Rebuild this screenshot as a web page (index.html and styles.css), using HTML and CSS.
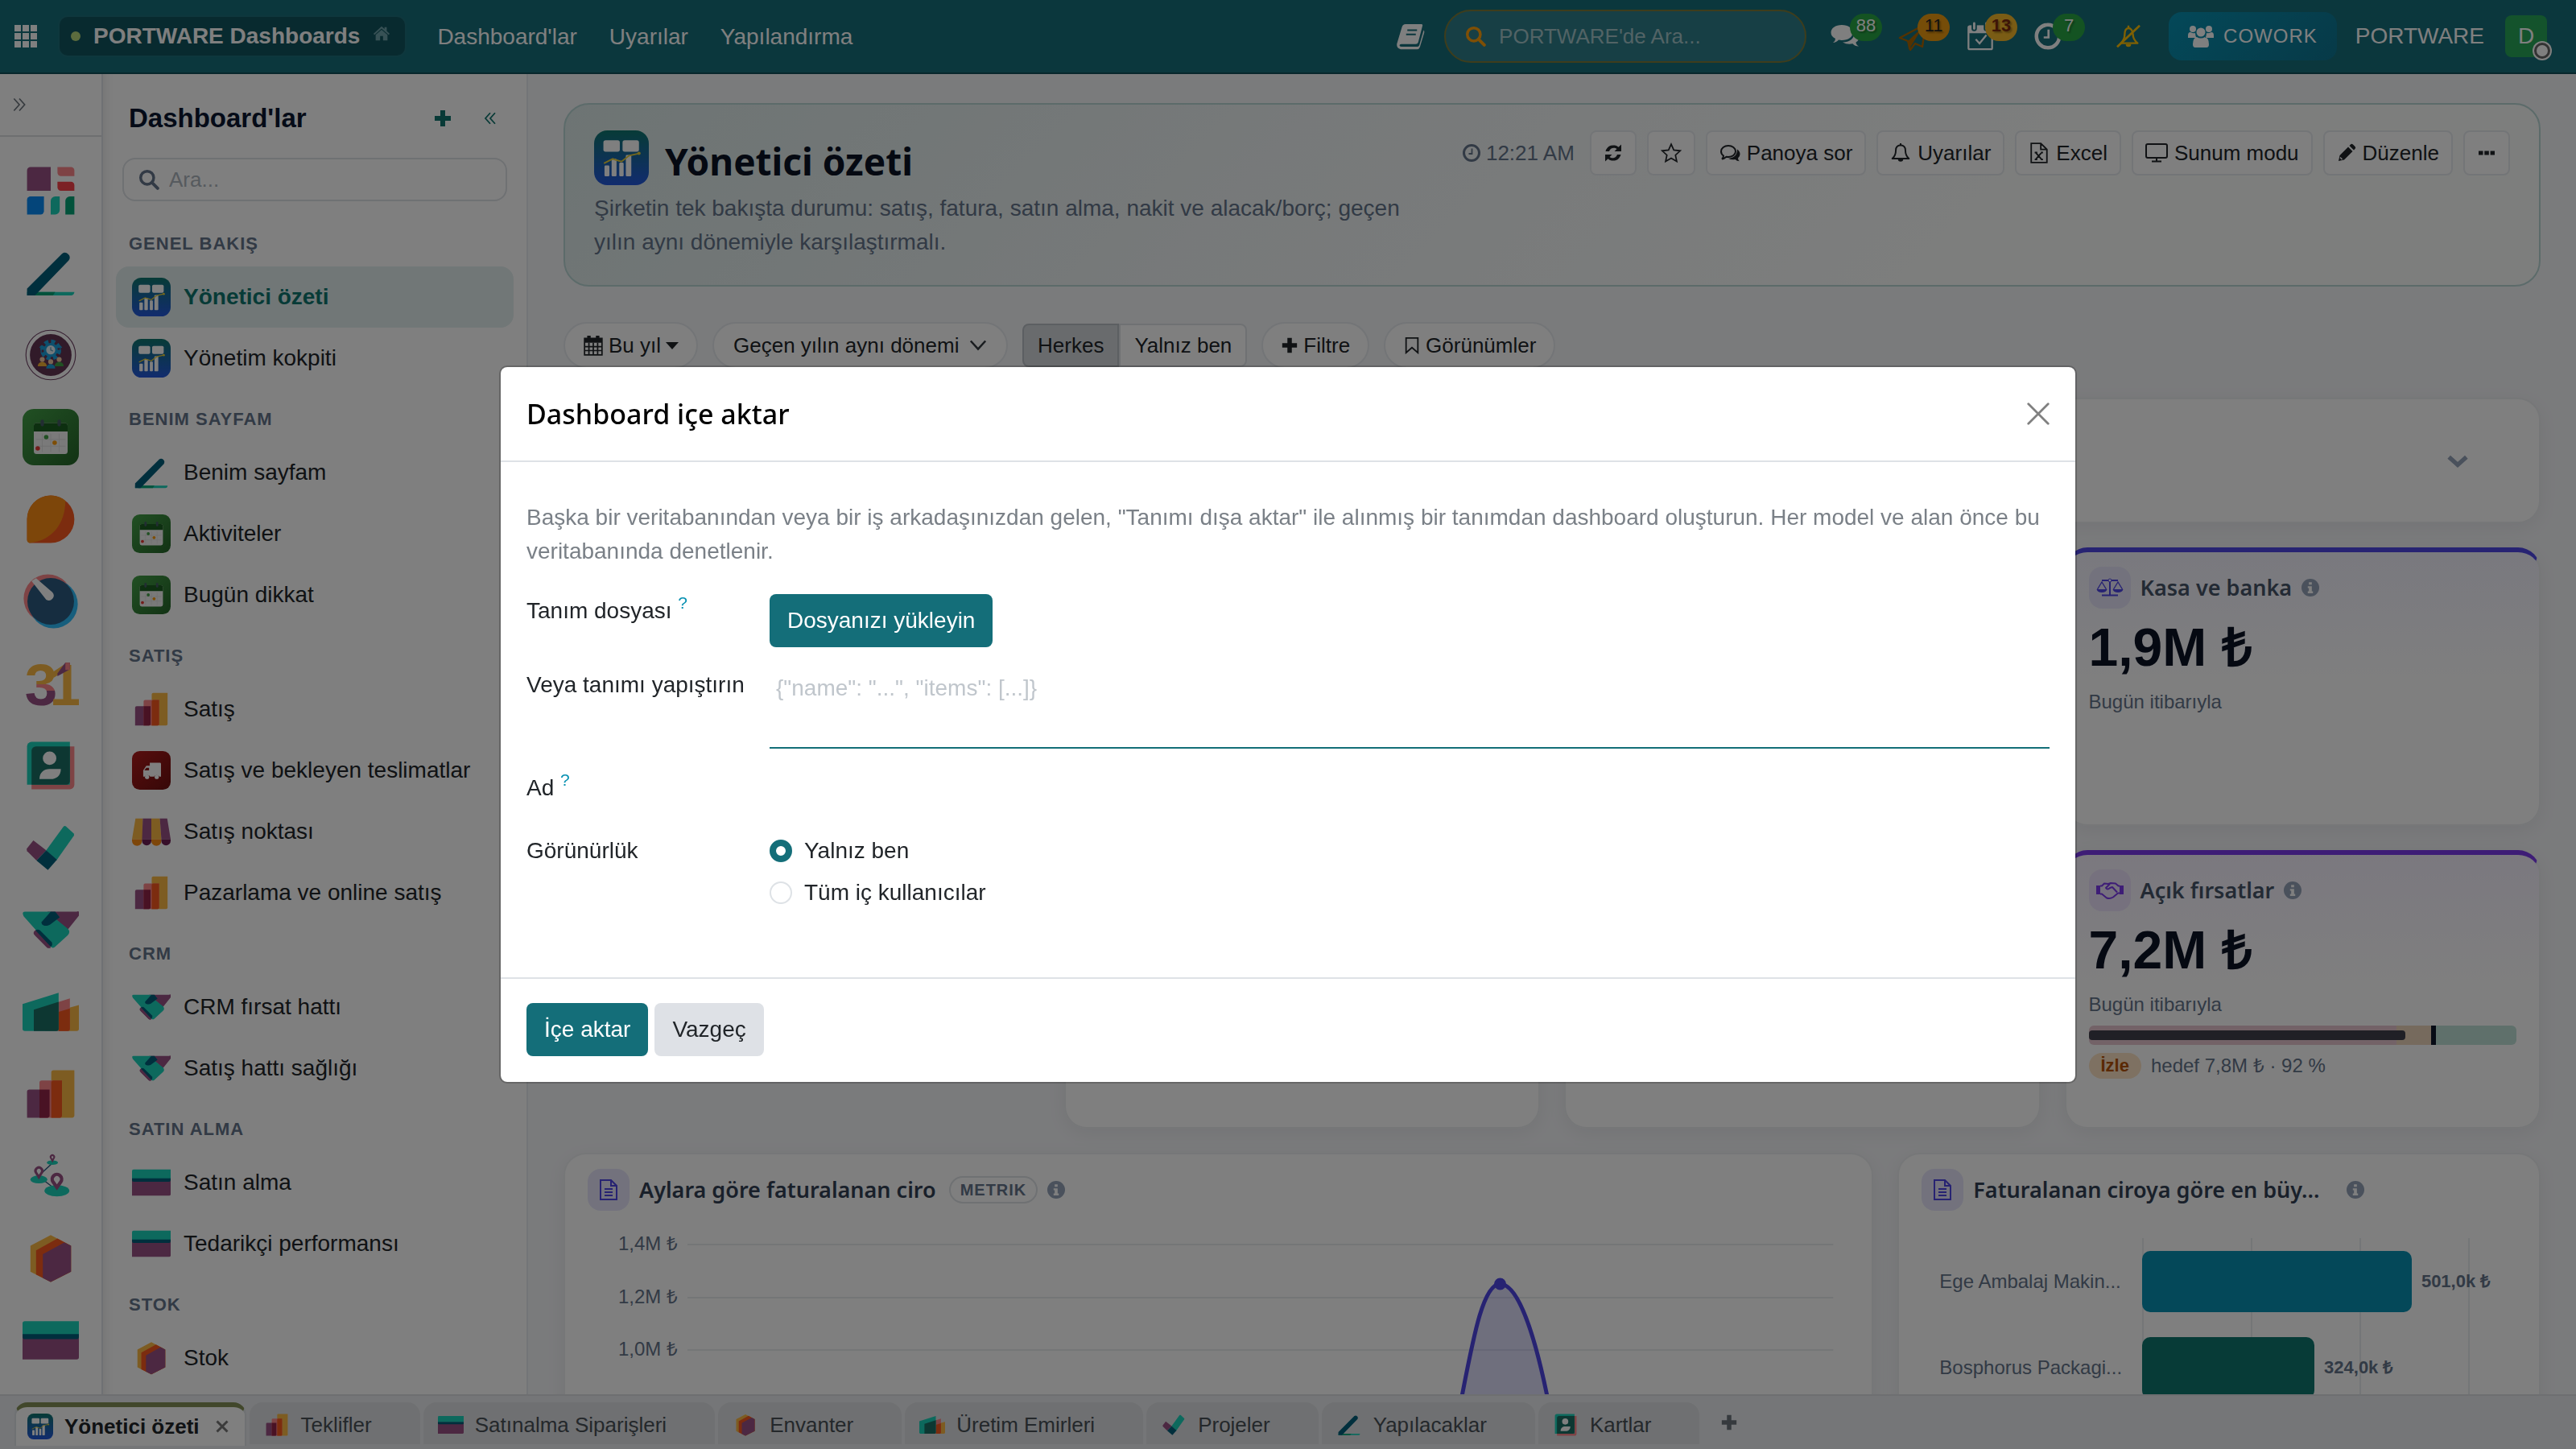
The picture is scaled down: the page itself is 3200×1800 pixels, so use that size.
FILE: index.html
```html
<!DOCTYPE html>
<html lang="tr">
<head>
    <meta charset="UTF-8">
    <meta name="viewport" content="width=device-width, initial-scale=1.0">
    <title>PORTWARE Dashboards</title>
    <link rel="stylesheet" href="styles.css">
</head>
<body>

    <!-- Icon sprite -->
    <svg class="sprite" aria-hidden="true">
        <defs>
            <linearGradient id="g-dash" x1="0" y1="0" x2="0" y2="1"><stop offset="0" stop-color="#0f766e"/><stop offset="1" stop-color="#2458dd"/></linearGradient>
            <linearGradient id="g-green" x1="0" y1="0" x2="1" y2="1"><stop offset="0" stop-color="#43a047"/><stop offset="1" stop-color="#256529"/></linearGradient>
            <linearGradient id="g-red" x1="0" y1="0" x2="1" y2="1"><stop offset="0" stop-color="#b01c1c"/><stop offset="1" stop-color="#6d0f0f"/></linearGradient>
            <linearGradient id="g-three" x1="0" y1="0" x2="0" y2="1"><stop offset=".5" stop-color="#fbb945"/><stop offset=".5" stop-color="#fc868b"/><stop offset=".6" stop-color="#fc868b"/><stop offset=".6" stop-color="#985184"/></linearGradient>
        </defs>

        <symbol id="app-dash" viewBox="0 0 50 50">
            <rect width="50" height="50" rx="12" fill="url(#g-dash)"/>
            <g fill="#fff"><rect x="8.500" y="9" width="15" height="10.500" rx="2"/><rect x="26" y="9" width="15" height="10.500" rx="2"/><rect x="9.500" y="32" width="4.500" height="10" rx="1"/><rect x="16" y="26" width="4.500" height="16" rx="1"/><rect x="23" y="29.500" width="4" height="12.500" rx="1"/><rect x="29" y="22.500" width="5" height="19.500" rx="1"/></g>
            <path d="M9 30l8-4 8 2.500 7-5.500 9-2" fill="none" stroke="#e8cf3a" stroke-width="1.400"/><circle cx="41" cy="21" r="1.500" fill="#e8cf3a"/>
        </symbol>
        <symbol id="app-home" viewBox="0 0 50 50">
            <path d="M4 7a3 3 0 0 1 3-3h18v21H4z" fill="#985184"/><path d="M31 4h12a3 3 0 0 1 3 3v5H34a3 3 0 0 1-3-3z" fill="#fc868b"/><path d="M31 17h12a3 3 0 0 1 3 3v5H34a3 3 0 0 1-3-3z" fill="#f8434a"/><path d="M4 33a3 3 0 0 1 3-3h12v13a3 3 0 0 1-3 3H4z" fill="#088bf5"/><path d="M25 46V34a4 4 0 0 1 4-4h4v12a4 4 0 0 1-4 4z" fill="#1ad3bb"/><path d="M38 46V34a4 4 0 0 1 4-4h4v16z" fill="#05a577"/>
        </symbol>
        <symbol id="app-todo" viewBox="0 0 50 50">
            <path d="M4 42h42a3 3 0 0 1-3 3H4z" fill="#1ad3bb"/><path d="M12 42h17l-2 3H8z" fill="#05a577"/><path d="M4 45v-6L35 8a4.300 4.300 0 0 1 6 6L11 45z" fill="#005e7a"/>
        </symbol>
        <symbol id="app-hr" viewBox="0 0 50 50">
            <circle cx="25" cy="25" r="22" fill="none" stroke="#6d4163" stroke-width=".8"/><circle cx="25" cy="25" r="18.500" fill="#633553"/>
            <circle cx="25" cy="20.500" r="7.500" fill="none" stroke="#1ba1dd" stroke-width="3.500" stroke-dasharray="3.600 2.300"/><circle cx="25" cy="20.500" r="6.300" fill="#1ba1dd"/><circle cx="25" cy="20.500" r="4" fill="#e6f2f8"/><path d="M25 18v2.500l2 1" stroke="#6aa7c4" fill="none"/>
            <path d="M16.500 23v-6m-1.300 1.500l1.300-1.500 1.300 1.500M33.500 23v-6m-1.300 1.500l1.300-1.500 1.300 1.500" stroke="#1ba1dd" stroke-width=".8" fill="none"/>
            <circle cx="17.500" cy="29" r="2.200" fill="#f1c9a5"/><circle cx="32.500" cy="29" r="2.200" fill="#f1c9a5"/><path d="M13.500 35a4 4 0 0 1 8 0z" fill="#f2b035"/><path d="M28.500 35a4 4 0 0 1 8 0z" fill="#43a047"/><circle cx="25" cy="31" r="2.200" fill="#f1c9a5"/><path d="M21 37a4 4 0 0 1 8 0z" fill="#1ba1dd"/>
        </symbol>
        <symbol id="app-activity" viewBox="0 0 50 50">
            <rect width="50" height="50" rx="10" fill="url(#g-green)"/><rect x="10" y="12.500" width="30" height="27.500" rx="2.500" fill="#f4f4f4"/><path d="M10 20v-5a2.500 2.500 0 0 1 2.500-2.500h25A2.500 2.500 0 0 1 40 15v5z" fill="#1b5e20"/>
            <g fill="#455a64"><rect x="16" y="9.500" width="3" height="6" rx="1.500"/><rect x="31" y="9.500" width="3" height="6" rx="1.500"/></g>
            <path d="M17.500 22v16M25 22v16M32.500 22v16M12 27h26M12 33h26" stroke="#dcdcdc" stroke-width=".6"/><circle cx="21" cy="25" r="2" fill="#43a047"/><circle cx="28.500" cy="30" r="2" fill="#fb9a0a"/><circle cx="13.500" cy="35" r="2" fill="#e53935"/>
        </symbol>
        <symbol id="app-discuss" viewBox="0 0 50 50">
            <path d="M4 25a21 21 0 1 1 21 21H7a3 3 0 0 1-3-3z" fill="#f9591f"/><path d="M38 8.500C38 28 27 44 6 46a3 3 0 0 1-2-3V25A21 21 0 0 1 38 8.500z" fill="#fb8c14"/>
        </symbol>
        <symbol id="app-gauge" viewBox="0 0 50 50">
            <circle cx="22.500" cy="22.500" r="21.500" fill="#fc868b"/><circle cx="27.500" cy="27.500" r="21.500" fill="#2ebcfa"/><circle cx="25" cy="25" r="20.700" fill="#2c5b80"/><path d="M8 7l4-2.500L26.500 17a4.300 4.300 0 0 1-5.500 6.500z" fill="#fff"/>
        </symbol>
        <symbol id="app-contacts" viewBox="0 0 50 50">
            <path d="M8 8h38v34a4 4 0 0 1-4 4H8z" fill="#fc868b"/><path d="M4 8a4 4 0 0 1 4-4h34v38H4z" fill="#1ad3bb"/><path d="M8 12a4 4 0 0 1 4-4h30v31a3 3 0 0 1-3 3H8z" fill="#1a6f65"/><circle cx="24" cy="18.500" r="6" fill="#fff"/><path d="M15 37c0-6 4-9 9-9h10c0 6-4 9-9 9z" fill="#fff"/>
        </symbol>
        <symbol id="app-project" viewBox="0 0 50 50">
            <path d="M3.600 26l6-7.500L21 27.300 12.400 36.500 4 28z" fill="#985184"/><path d="M21 27.300L36.500 6a2 2 0 0 1 2 0l7 6.500a2 2 0 0 1 0 2L30 36.500z" fill="#1ad3bb"/><path d="M12.400 36.500L21 27.300l9.500 8.500-8 9z" fill="#005e7a"/>
        </symbol>
        <symbol id="app-crm" viewBox="0 0 50 50">
            <path d="M22 9h26a2 2 0 0 1 2 3.500L40 25z" fill="#985184"/><path d="M10 29a3 3 0 0 1 5-3l11 10-2 5h-2z" fill="#985184"/><path d="M2 9h23l4 6 11 9q3 3 0 6L29 40q-2 2-4 0L1 13Q-1 9 2 9z" fill="#1ad3bb"/><path d="M11 30a4 4 0 0 1 1-4l4 3 8 8 1 4q-2 1-4-1z" fill="#985184"/><path d="M25 9h4l4 5-8 6c-4 3-9 1-8-2z" fill="#005e7a"/><path d="M11.500 25.500q2-1.500 4 0L26 36q1 3-1 4z" fill="#005e7a"/>
        </symbol>
        <symbol id="app-mrp" viewBox="0 0 50 50">
            <path d="M32 24l18-5v21a2 2 0 0 1-2 2H32z" fill="#fbb945"/><path d="M20 20l22-7v27a2 2 0 0 1-2 2H20z" fill="#fc868b"/><path d="M32 25l10-3v18a2 2 0 0 1-2 2h-8z" fill="#f9591f"/><path d="M0 18l32-10v32a2 2 0 0 1-2 2H2a2 2 0 0 1-2-2z" fill="#1ad3bb"/><path d="M10 23l22-7v24a2 2 0 0 1-2 2H10z" fill="#1a6f65"/>
        </symbol>
        <symbol id="app-sales" viewBox="0 0 50 50">
            <path d="M4 23a2 2 0 0 1 2-2h18v23a2 2 0 0 1-2 2H4z" fill="#985184"/><path d="M25.500 6a2 2 0 0 1 2-2H46v40a2 2 0 0 1-2 2H25.500z" fill="#fbb945"/><path d="M15 15a2 2 0 0 1 2-2h18v31a2 2 0 0 1-2 2H15z" fill="#fc868b"/><path d="M15 21h9v23a2 2 0 0 1-2 2h-7z" fill="#932449"/><path d="M25.500 15a2 2 0 0 1 2-2H35v31a2 2 0 0 1-2 2h-7.500z" fill="#f9591f"/>
        </symbol>
        <symbol id="app-map" viewBox="0 0 50 50">
            <path d="M27 13L14 25l17 13" stroke="#2c5b80" fill="none"/><g fill="#1ad3bb"><ellipse cx="14.500" cy="28" rx="7.500" ry="3.500"/><ellipse cx="30.500" cy="38" rx="11" ry="5"/><ellipse cx="26.500" cy="13" rx="5" ry="2"/></g>
            <g fill="none" stroke="#985184"><path d="M14.500 26l-2.500-4a3 3 0 1 1 5 0z" stroke-width="2.200"/><path d="M30.500 35l-3.500-5a4.200 4.200 0 1 1 7 0z" stroke-width="3"/><path d="M26.500 11.500l-1.300-2.500a1.600 1.600 0 1 1 2.600 0z" stroke-width="1.500"/></g>
        </symbol>
        <symbol id="app-stock" viewBox="0 0 50 50">
            <path d="M7 14l18-9.500L43 14v23l-18 9-18-9z" fill="#fbb945"/><path d="M12 18l19-10.500L43 14v23l-18 9-13-6.500z" fill="#f9591f"/><path d="M18 21.500L37 11l6 3v23l-18 9-7-3.500z" fill="#985184"/>
        </symbol>
        <symbol id="app-purchase" viewBox="0 0 50 50">
            <path d="M0 16h50v24a2 2 0 0 1-2 2H0z" fill="#985184"/><path d="M0 10a2 2 0 0 1 2-2h48v12H0z" fill="#1ad3bb"/><path d="M0 19.500h50V22a2 2 0 0 1-2 2H2a2 2 0 0 1-2-2z" fill="#005e7a"/>
        </symbol>
        <symbol id="app-truck" viewBox="0 0 50 50">
            <rect width="50" height="50" rx="10" fill="url(#g-red)"/><path d="M23 15h13a1.500 1.500 0 0 1 1.500 1.500V33h-2a4 4 0 0 0-7 0h-5a4 4 0 0 0-7 0h-2v-8l4-6H23z" fill="#fff"/><path d="M16 25l2.500-3.500H22V25z" fill="#8d1717"/><circle cx="19.500" cy="33.500" r="2.700" fill="#fff"/><circle cx="32" cy="33.500" r="2.700" fill="#fff"/>
        </symbol>
        <symbol id="app-pos" viewBox="0 0 50 50">
            <path d="M4.500 8H14v27H0z" fill="#fbb945"/><path d="M14 8h11v27H13z" fill="#985184"/><path d="M25 8h11l2 27H25z" fill="#fbb945"/><path d="M36 8h9.500L50 35H38z" fill="#985184"/>
            <path d="M0 35h13v2a6.400 6.400 0 0 1-13 0zM25 35h13v2a6.400 6.400 0 0 1-13 0z" fill="#fb8c14"/><path d="M13 35h12v2a6 6 0 0 1-12 0zM38 35h12v2a6 6 0 0 1-12 0z" fill="#6f1f55"/>
        </symbol>

        <symbol id="i-grid" viewBox="0 0 28 28"><path d="M0 0h8v8H0zM10 0h8v8h-8zM20 0h8v8h-8zM0 10h8v8H0zM10 10h8v8h-8zM20 10h8v8h-8zM0 20h8v8H0zM10 20h8v8h-8zM20 20h8v8h-8z" fill="currentColor"/></symbol>
        <symbol id="i-house" viewBox="0 0 24 24"><path d="M12 3L1 13l1.500 1.500L12 6l9.500 8.500L23 13l-4-3.700V4h-3v2.500zM4 14.500V22h6v-6h4v6h6v-7.500L12 7.500z" fill="currentColor"/></symbol>
        <symbol id="i-search" viewBox="0 0 24 24"><circle cx="10" cy="10" r="7.500" fill="none" stroke="currentColor" stroke-width="3.200"/><path d="M15.500 15.500l6.500 6.500" stroke="currentColor" stroke-width="3.600" stroke-linecap="round"/></symbol>
        <symbol id="i-plus" viewBox="0 0 24 24"><path d="M9 2h6v7h7v6h-7v7H9v-7H2V9h7z" fill="currentColor"/></symbol>
        <symbol id="i-right2" viewBox="0 0 24 24"><path d="M4 3l8 9-8 9M12 3l8 9-8 9" fill="none" stroke="currentColor" stroke-width="2"/></symbol>
        <symbol id="i-left2" viewBox="0 0 24 24"><path d="M12 3l-8 9 8 9M20 3l-8 9 8 9" fill="none" stroke="currentColor" stroke-width="2.400"/></symbol>
        <symbol id="i-book" viewBox="0 0 24 24"><path d="M8 2h13q1.500 0 1 1.500L18.500 17q-.5 1.500-2 1.500H4.500Q3 18.500 3 19.500t1.500 1.200H18q1 0 1.400-1.200L23 7q.8.600.5 2l-3.600 12q-.6 1.800-2.400 1.800H4Q.5 22 .8 18.500L5 4.500Q5.800 2 8 2z" fill="currentColor"/><path d="M9.500 7h8M8.500 10.500h8" stroke="#166e7b" stroke-width="1.400"/></symbol>
        <symbol id="i-chat" viewBox="0 0 36 32"><path d="M14 2c8 0 13.500 4 13.500 9.500S22 21 14 21q-2 0-4-.4Q7 24 3 24q3-2 3-5-5.500-3-5.500-7.500C.5 6 6 2 14 2z" fill="currentColor"/><path d="M30 9q5.500 3 5.500 8 0 4-4 6.500 0 3 3.500 5-4.500.2-7.500-3.200-7 1.500-12.500-1.800Q30 23 30 9z" fill="currentColor"/></symbol>
        <symbol id="i-plane" viewBox="0 0 36 36"><path d="M2 20L34 3l-4 28-9-4-6 8-3-11z" fill="none" stroke="currentColor" stroke-width="2.400" stroke-linejoin="round"/><path d="M12 24L31 6 18 27l-5 8z" fill="currentColor"/></symbol>
        <symbol id="i-calcheck" viewBox="0 0 34 38"><path d="M1 7q0-2 2-2h28q2 0 2 2v8H1z" fill="currentColor"/><rect x="1.500" y="6" width="31" height="30" rx="1.500" fill="none" stroke="currentColor" stroke-width="2.400"/><path d="M9 1v8M25 1v8" stroke="#166e7b" stroke-width="7" stroke-linecap="round"/><path d="M9 2v7M25 2v7" stroke="currentColor" stroke-width="3" stroke-linecap="round"/><path d="M11 23l5 5.500 9-11" fill="none" stroke="currentColor" stroke-width="2.400"/></symbol>
        <symbol id="i-clock" viewBox="0 0 24 24"><circle cx="12" cy="12" r="9.500" fill="none" stroke="currentColor" stroke-width="3"/><path d="M12.500 6.500v6.500H8.500" fill="none" stroke="currentColor" stroke-width="1.800"/></symbol>
        <symbol id="i-belloff" viewBox="0 0 24 24"><path d="M12 2v2M5 18.500q3.500-3.500 3.500-8C8.500 6.500 10 4.500 12 4.500s4 2 4.200 6q.2 4.500 4.300 8z" fill="none" stroke="currentColor" stroke-width="1.800" stroke-linejoin="round"/><path d="M9.500 19.500h5a2.500 2.500 0 0 1-5 0z" fill="currentColor"/><path d="M1.500 22L22.500 2" stroke="currentColor" stroke-width="2"/></symbol>
        <symbol id="i-users" viewBox="0 0 32 28"><g fill="currentColor"><circle cx="6" cy="5" r="4"/><circle cx="26" cy="5" r="4"/><circle cx="16" cy="9" r="5.500"/><path d="M0 16V13q0-4 3-4 4 2 6 1 0 4 2 6zM32 16v-3q0-4-3-4-4 2-6 1 0 4-2 6zM9 28q-3 0-3-4 0-8 5-9 5 3 10 0 5 1 5 9 0 4-3 4z"/></g></symbol>
        <symbol id="i-refresh" viewBox="0 0 24 24"><path d="M2.500 10a9.800 9.800 0 0 1 16-5.200L22 1.500V10h-8.500l3-3A6 6 0 0 0 7 10zM21.500 14a9.800 9.800 0 0 1-16 5.200L2 22.500V14h8.500l-3 3a6 6 0 0 0 9.500-3z" fill="currentColor"/></symbol>
        <symbol id="i-star" viewBox="0 0 24 24"><path d="M12 2l3 6.700 7.300.8-5.400 5 1.500 7.200L12 18l-6.400 3.700 1.500-7.200-5.400-5L9 8.700z" fill="none" stroke="currentColor" stroke-width="1.600"/></symbol>
        <symbol id="i-ask" viewBox="0 0 26 24"><path d="M11 3c5 0 9 3 9 7s-4 7-9 7l-2.500-.3Q6 19 3 19.500q2-1.500 2-4-3-2-3-5.500c0-4 4-7 9-7z" fill="none" stroke="currentColor" stroke-width="2"/><path d="M22 7.500q3.500 2.500 3.500 6 0 3-2.500 5 0 2.200 2 3.800-3.500 0-5.500-2.300-5 1-8.500-1.200 11-.8 11-11.300z" fill="currentColor"/></symbol>
        <symbol id="i-bell" viewBox="0 0 24 24"><path d="M12 1v2M2.500 18.500q4-3.500 4-9.500 0-5.500 5.500-6 5.500.5 5.500 6 0 6 4 9.500z" fill="none" stroke="currentColor" stroke-width="1.800" stroke-linejoin="round"/><path d="M9 19h6a3 3 0 0 1-6 0z" fill="currentColor"/></symbol>
        <symbol id="i-excel" viewBox="0 0 24 24"><path d="M3 1h11l7 7v15H3zM14 1v7h7M8 11.500l7 8M15 11.500l-7 8M7 11.500h3m4 0h2.500M7 19.500h3m4 0h2.500" fill="none" stroke="currentColor" stroke-width="1.700"/></symbol>
        <symbol id="i-screen" viewBox="0 0 28 24"><rect x="1" y="1" width="26" height="17" rx="2" fill="none" stroke="currentColor" stroke-width="2"/><path d="M14 18v4M8 22.500h12" stroke="currentColor" stroke-width="2"/></symbol>
        <symbol id="i-pencil" viewBox="0 0 24 24"><path d="M2 22l1.500-7L14 4.500l5.500 5.500L9 20.500zM15.500 3l2-2q1.200-.6 2.500.5l2.500 2.500q1.200 1.200.3 2.500L21 8.500z" fill="currentColor"/><path d="M4 17.500l2.500 2.500" stroke="#fff" stroke-width="1.500"/></symbol>
        <symbol id="i-dots" viewBox="0 0 24 24"><path d="M2 9.500h5.500v5H2zM9.300 9.500h5.500v5H9.300zM16.600 9.500H22v5h-5.400z" fill="currentColor"/></symbol>
        <symbol id="i-cal" viewBox="0 0 24 24"><path d="M2 4h20v5H2z" fill="currentColor"/><path d="M2 4h20v19H2zM7 9v14M12 9v14M17 9v14M2 13.500h20M2 18h20" fill="none" stroke="currentColor" stroke-width="1.600"/><path d="M7 1v5M17 1v5" stroke="currentColor" stroke-width="4"/></symbol>
        <symbol id="i-mark" viewBox="0 0 24 24"><path d="M4 2h16v20l-8-7-8 7z" fill="none" stroke="currentColor" stroke-width="2"/></symbol>
        <symbol id="i-caret" viewBox="0 0 16 16"><path d="M0 4h16l-8 9z" fill="currentColor"/></symbol>
        <symbol id="i-down" viewBox="0 0 24 24"><path d="M2 8l10 9 10-9" fill="none" stroke="currentColor" stroke-width="5"/></symbol>
        <symbol id="i-x" viewBox="0 0 24 24"><path d="M1.500 1.500l21 21M22.500 1.500l-21 21" stroke="currentColor" stroke-width="2.400" stroke-linecap="round"/></symbol>
        <symbol id="i-close" viewBox="0 0 16 16"><path d="M1.500 1.500l13 13M14.500 1.500l-13 13" stroke="currentColor" stroke-width="3"/></symbol>
        <symbol id="i-info" viewBox="0 0 24 24"><circle cx="12" cy="12" r="12" fill="currentColor"/><path d="M10 4.500h4v3.500h-4zM8.500 10H14v7h1.500v2.500h-7V17H10v-4.500H8.500z" fill="#fff"/></symbol>
        <symbol id="i-scale" viewBox="0 0 34 24"><path d="M7 3h20M17 3v18M7 21.500h20" stroke="currentColor" stroke-width="2"/><circle cx="17" cy="3" r="2" fill="#fff" stroke="currentColor"/><path d="M1.500 14L7 5l5.500 9M21.500 14L27 5l5.500 9" fill="none" stroke="currentColor" stroke-width="1.400"/><path d="M.5 14h13q-1 4-6.500 4T.5 14zM20.500 14h13q-1 4-6.500 4t-6.500-4z" fill="currentColor"/></symbol>
        <symbol id="i-shake" viewBox="0 0 34 24"><path d="M0 6h5v11H0zM29 6h5v11h-5z" fill="currentColor"/><path d="M5 6.500h2l3-3 5 .500 3-1 6 .500 3.500 3H29M5 16.500h2l6 5q4 1.500 8-1l6-5h2M17 4l-5 5q2 3 5 0l3-1 6 6.500" fill="none" stroke="currentColor" stroke-width="2" stroke-linejoin="round"/></symbol>
        <symbol id="i-file" viewBox="0 0 24 28"><path d="M2 2h13l7 7v17H2zM15 2v7h7M7 13h10M7 17h10M7 21h10" fill="none" stroke="currentColor" stroke-width="2"/></symbol>
    </svg>

    <header class="navbar">
        <button class="icon-btn" aria-label="Uygulamalar"><svg class="ic-28"><use href="#i-grid"/></svg></button>
        <a class="brand" href="#"><span class="brand-dot"></span>PORTWARE Dashboards<svg class="ic-22 brand-home"><use href="#i-house"/></svg></a>
        <nav class="nav-links">
            <a href="#">Dashboard'lar</a>
            <a href="#">Uyarılar</a>
            <a href="#">Yapılandırma</a>
        </nav>
        <div class="nav-right">
            <button class="icon-btn" aria-label="Kılavuz"><svg class="ic-36"><use href="#i-book"/></svg></button>
            <label class="nav-search"><svg class="ic-26"><use href="#i-search"/></svg><input type="search" placeholder="PORTWARE'de Ara..." aria-label="PORTWARE'de Ara"></label>
            <div class="systray">
                <button class="icon-btn tray" aria-label="Mesajlar"><svg class="ic-36"><use href="#i-chat"/></svg><span class="badge green">88</span></button>
                <button class="icon-btn tray plane" aria-label="Gönderiler"><svg class="ic-36"><use href="#i-plane"/></svg><span class="badge amber">11</span></button>
                <button class="icon-btn tray" aria-label="Görevler"><svg class="ic-36"><use href="#i-calcheck"/></svg><span class="badge gold">13</span></button>
                <button class="icon-btn tray" aria-label="Aktiviteler"><svg class="ic-36"><use href="#i-clock"/></svg><span class="badge green">7</span></button>
            </div>
            <button class="icon-btn mute" aria-label="Bildirimler kapalı"><svg class="ic-32"><use href="#i-belloff"/></svg></button>
            <button class="cowork"><svg class="ic-32"><use href="#i-users"/></svg>COWORK</button>
            <span class="company">PORTWARE</span>
            <button class="avatar" aria-label="Profil">D<span class="status"></span></button>
        </div>
    </header>

    <div class="workspace">
        <aside class="rail">
            <button class="rail-toggle" aria-label="Genişlet"><svg class="ic-20"><use href="#i-right2"/></svg></button>
            <nav class="rail-apps">
                <a href="#" aria-label="Ana sayfa"><svg><use href="#app-home"/></svg></a>
                <a href="#" aria-label="Yapılacaklar"><svg><use href="#app-todo"/></svg></a>
                <a href="#" aria-label="İnsan kaynakları"><svg><use href="#app-hr"/></svg></a>
                <a href="#" aria-label="Aktiviteler"><svg><use href="#app-activity"/></svg></a>
                <a href="#" aria-label="Mesajlaşma"><svg><use href="#app-discuss"/></svg></a>
                <a href="#" aria-label="Göstergeler"><svg><use href="#app-gauge"/></svg></a>
                <a href="#" aria-label="Takvim">
                    <svg class="calendar-icon" viewBox="0 0 50 50">
                        <text x="2" y="44" fill="url(#g-three)">3</text>
                        <text x="24" y="44" fill="#fbb945">1</text>
                        <path d="M31 16l7-9.500h4v6l-11 6z" fill="#985184"/><path d="M38 6.500h4V13h-4z" fill="#fc868b"/>
                    </svg>
                </a>
                <a href="#" aria-label="Kartlar"><svg><use href="#app-contacts"/></svg></a>
                <a href="#" aria-label="Projeler"><svg><use href="#app-project"/></svg></a>
                <a href="#" aria-label="CRM"><svg><use href="#app-crm"/></svg></a>
                <a href="#" aria-label="Üretim"><svg><use href="#app-mrp"/></svg></a>
                <a href="#" aria-label="Satış"><svg><use href="#app-sales"/></svg></a>
                <a href="#" aria-label="Saha"><svg><use href="#app-map"/></svg></a>
                <a href="#" aria-label="Envanter"><svg><use href="#app-stock"/></svg></a>
                <a href="#" aria-label="Satın alma"><svg><use href="#app-purchase"/></svg></a>
            </nav>
        </aside>

        <aside class="sidebar">
            <div class="sidebar-head">
                <h2>Dashboard'lar</h2>
                <button class="icon-btn" aria-label="Ekle"><svg class="ic-24"><use href="#i-plus"/></svg></button>
                <button class="icon-btn" aria-label="Daralt"><svg class="ic-18"><use href="#i-left2"/></svg></button>
            </div>
            <label class="side-search"><svg class="ic-26"><use href="#i-search"/></svg><input type="search" placeholder="Ara..." aria-label="Ara"></label>
            <nav class="side-nav">
                <h3>GENEL BAKIŞ</h3>
                <a class="active" href="#"><svg><use href="#app-dash"/></svg>Yönetici özeti</a>
                <a href="#"><svg><use href="#app-dash"/></svg>Yönetim kokpiti</a>
                <h3>BENIM SAYFAM</h3>
                <a href="#"><svg><use href="#app-todo"/></svg>Benim sayfam</a>
                <a href="#"><svg><use href="#app-activity"/></svg>Aktiviteler</a>
                <a href="#"><svg><use href="#app-activity"/></svg>Bugün dikkat</a>
                <h3>SATIŞ</h3>
                <a href="#"><svg><use href="#app-sales"/></svg>Satış</a>
                <a href="#"><svg><use href="#app-truck"/></svg>Satış ve bekleyen teslimatlar</a>
                <a href="#"><svg><use href="#app-pos"/></svg>Satış noktası</a>
                <a href="#"><svg><use href="#app-sales"/></svg>Pazarlama ve online satış</a>
                <h3>CRM</h3>
                <a href="#"><svg><use href="#app-crm"/></svg>CRM fırsat hattı</a>
                <a href="#"><svg><use href="#app-crm"/></svg>Satış hattı sağlığı</a>
                <h3>SATIN ALMA</h3>
                <a href="#"><svg><use href="#app-purchase"/></svg>Satın alma</a>
                <a href="#"><svg><use href="#app-purchase"/></svg>Tedarikçi performansı</a>
                <h3>STOK</h3>
                <a href="#"><svg><use href="#app-stock"/></svg>Stok</a>
            </nav>
        </aside>

        <main class="main">
            <section class="hero">
                <div class="hero-text">
                    <div class="hero-title"><svg><use href="#app-dash"/></svg><h1>Yönetici özeti</h1></div>
                    <p>Şirketin tek bakışta durumu: satış, fatura, satın alma, nakit ve alacak/borç; geçen yılın aynı dönemiyle karşılaştırmalı.</p>
                </div>
                <div class="hero-actions">
                    <span class="clock"><svg class="ic-24"><use href="#i-clock"/></svg>12:21 AM</span>
                    <button aria-label="Yenile"><svg class="ic-24"><use href="#i-refresh"/></svg></button>
                    <button aria-label="Favori"><svg class="ic-26"><use href="#i-star"/></svg></button>
                    <button><svg class="ic-26"><use href="#i-ask"/></svg>Panoya sor</button>
                    <button><svg class="ic-26"><use href="#i-bell"/></svg>Uyarılar</button>
                    <button><svg class="ic-26"><use href="#i-excel"/></svg>Excel</button>
                    <button><svg class="ic-28"><use href="#i-screen"/></svg>Sunum modu</button>
                    <button><svg class="ic-24"><use href="#i-pencil"/></svg>Düzenle</button>
                    <button aria-label="Diğer"><svg class="ic-24"><use href="#i-dots"/></svg></button>
                </div>
            </section>

            <div class="filters">
                <button class="pill"><svg class="ic-26"><use href="#i-cal"/></svg>Bu yıl<svg class="ic-16"><use href="#i-caret"/></svg></button>
                <select class="pill" aria-label="Karşılaştırma dönemi"><option>Geçen yılın aynı dönemi</option></select>
                <div class="btn-group"><button class="on">Herkes</button><button>Yalnız ben</button></div>
                <button class="pill"><svg class="ic-22"><use href="#i-plus"/></svg>Filtre</button>
                <button class="pill"><svg class="ic-22"><use href="#i-mark"/></svg>Görünümler</button>
            </div>

            <section class="card summary"><svg class="ic-26"><use href="#i-down"/></svg></section>

            <section class="board">
                <article class="card kpi indigo"></article>
                <article class="card kpi indigo"></article>
                <article class="card kpi indigo"></article>
                <article class="card kpi indigo">
                    <header><span class="chip"><svg><use href="#i-scale"/></svg></span><h4>Kasa ve banka</h4><svg class="ic-22 info"><use href="#i-info"/></svg></header>
                    <strong>1,9M ₺</strong>
                    <small>Bugün itibarıyla</small>
                </article>
                <article class="card kpi violet second"></article>
                <article class="card kpi violet"></article>
                <article class="card kpi violet">
                    <header><span class="chip"><svg><use href="#i-shake"/></svg></span><h4>Açık fırsatlar</h4><svg class="ic-22 info"><use href="#i-info"/></svg></header>
                    <strong>7,2M ₺</strong>
                    <small>Bugün itibarıyla</small>
                    <div class="bullet"><span class="bullet-fill" style="width: 74%"></span><span class="bullet-mark" style="left: 80%"></span></div>
                    <div class="target"><span class="tag">İzle</span>hedef 7,8M ₺ · 92 %</div>
                </article>

                <article class="card chart wide indigo">
                    <header><span class="chip"><svg><use href="#i-file"/></svg></span><h4>Aylara göre faturalanan ciro</h4><span class="metric">METRIK</span><svg class="ic-22 info"><use href="#i-info"/></svg></header>
                    <svg class="line-chart" viewBox="0 0 1568 560">
                        <path d="M124 26h1424M124 92h1424M124 157h1424M124 223h1424M124 288h1424M124 354h1424" stroke="#e9ecef" stroke-width="2"/>
                        <g class="axis" text-anchor="end"><text x="112" y="33">1,4M ₺</text><text x="112" y="99">1,2M ₺</text><text x="112" y="164">1,0M ₺</text><text x="112" y="230">800,0k ₺</text></g>
                        <path d="M1030 485C1070 400 1076 290 1087 212C1101 140 1113 75 1134 75C1155 75 1175 130 1192 212C1205 290 1216 400 1256 485z" fill="#4f46e5" fill-opacity=".18" stroke="#4f46e5" stroke-width="5"/>
                        <circle cx="1134" cy="75" r="5" fill="#4f46e5" stroke="#4f46e5" stroke-width="5"/>
                    </svg>
                </article>
                <article class="card chart narrow indigo">
                    <header><span class="chip"><svg><use href="#i-file"/></svg></span><h4>Faturalanan ciroya göre en büy...</h4><svg class="ic-22 info"><use href="#i-info"/></svg></header>
                    <div class="bars">
                        <span class="bar-label">Ege Ambalaj Makin...</span>
                        <div class="bar-track"><span class="bar blue" style="width: 72%"></span><b>501,0k ₺</b></div>
                        <span class="bar-label">Bosphorus Packagi...</span>
                        <div class="bar-track"><span class="bar teal" style="width: 46%"></span><b>324,0k ₺</b></div>
                    </div>
                </article>
            </section>
        </main>
    </div>

    <footer class="tabs">
        <div class="tab active"><svg><use href="#app-dash"/></svg><a href="#">Yönetici özeti</a><button class="icon-btn" aria-label="Kapat"><svg class="ic-16"><use href="#i-close"/></svg></button></div>
        <div class="tab"><svg><use href="#app-sales"/></svg><a href="#">Teklifler</a></div>
        <div class="tab"><svg><use href="#app-purchase"/></svg><a href="#">Satınalma Siparişleri</a></div>
        <div class="tab"><svg><use href="#app-stock"/></svg><a href="#">Envanter</a></div>
        <div class="tab"><svg><use href="#app-mrp"/></svg><a href="#">Üretim Emirleri</a></div>
        <div class="tab"><svg><use href="#app-project"/></svg><a href="#">Projeler</a></div>
        <div class="tab"><svg><use href="#app-todo"/></svg><a href="#">Yapılacaklar</a></div>
        <div class="tab"><svg><use href="#app-contacts"/></svg><a href="#">Kartlar</a></div>
        <button class="icon-btn add-tab" aria-label="Yeni sekme"><svg class="ic-22"><use href="#i-plus"/></svg></button>
    </footer>

    <!-- Import dialog -->
    <div class="backdrop">
        <form class="modal" role="dialog" aria-labelledby="modal-title">
            <header class="modal-head">
                <h4 id="modal-title">Dashboard içe aktar</h4>
                <button type="button" class="icon-btn" aria-label="Kapat"><svg class="ic-28"><use href="#i-x"/></svg></button>
            </header>
            <div class="modal-body">
                <p>Başka bir veritabanından veya bir iş arkadaşınızdan gelen, "Tanımı dışa aktar" ile alınmış bir tanımdan dashboard oluşturun. Her model ve alan önce bu veritabanında denetlenir.</p>
                <div class="field field-file">
                    <label for="upload">Tanım dosyası <sup>?</sup></label>
                    <div><button type="button" id="upload" class="btn primary">Dosyanızı yükleyin</button></div>
                </div>
                <div class="field field-text">
                    <label for="definition">Veya tanımı yapıştırın</label>
                    <textarea id="definition" placeholder="{&quot;name&quot;: &quot;...&quot;, &quot;items&quot;: [...]}"></textarea>
                </div>
                <div class="field field-name">
                    <label for="name">Ad <sup>?</sup></label>
                    <input type="text" id="name">
                </div>
                <div class="field">
                    <span>Görünürlük</span>
                    <div class="radios">
                        <label><input type="radio" name="visibility" checked>Yalnız ben</label>
                        <label><input type="radio" name="visibility">Tüm iç kullanıcılar</label>
                    </div>
                </div>
            </div>
            <footer class="modal-foot">
                <button type="button" class="btn primary">İçe aktar</button>
                <button type="button" class="btn secondary">Vazgeç</button>
            </footer>
        </form>
    </div>

</body>
</html>
```

FILE: styles.css
```css
* {
    box-sizing: border-box;
}

body {
    margin: 0;
    height: 100vh;
    display: flex;
    flex-direction: column;
    overflow: hidden;
    font-family: "Liberation Sans", Arial, sans-serif;
    font-size: 28px;
    line-height: 42px;
    color: #212529;
    background-color: #f5f6f9;
}

h1, h2, h3, h4, p {
    margin: 0;
}

a {
    color: inherit;
    text-decoration: none;
}

button, input, select, textarea {
    font: inherit;
    color: inherit;
    margin: 0;
}

button {
    cursor: pointer;
}

svg {
    flex-shrink: 0;
}

.sprite {
    position: absolute;
    width: 0;
    height: 0;
}

.ic-16 { width: 16px; height: 16px; }
.ic-18 { width: 18px; height: 18px; }
.ic-20 { width: 20px; height: 20px; }
.ic-22 { width: 22px; height: 22px; }
.ic-24 { width: 24px; height: 24px; }
.ic-26 { width: 26px; height: 26px; }
.ic-28 { width: 28px; height: 28px; }
.ic-32 { width: 32px; height: 32px; }
.ic-36 { width: 36px; height: 36px; }

.icon-btn {
    display: flex;
    padding: 0;
    border: 0;
    background: none;
}

/* Top bar */
.navbar {
    display: flex;
    align-items: center;
    height: 92px;
    flex-shrink: 0;
    padding: 0 36px 0 18px;
    background-color: #166e7b;
    border-bottom: 2px solid #0f4f59;
    color: #fff;
}

.brand {
    display: flex;
    align-items: center;
    height: 52px;
    margin: 0 38px 0 26px;
    padding: 0 18px 0 14px;
    border: 2px solid #1d6f7b;
    border-radius: 12px;
    background-color: #11555f;
    font-weight: 700;
}

.brand-dot {
    width: 12px;
    height: 12px;
    margin-right: 16px;
    border-radius: 50%;
    background-color: #b9d87c;
}

.brand-home {
    margin: 0 0 8px 16px;
    color: #6fa3ab;
}

.nav-links {
    display: flex;
    gap: 40px;
    padding-top: 2px;
}

.nav-right {
    display: flex;
    align-items: center;
    margin-left: auto;
}

.nav-search {
    display: flex;
    align-items: center;
    gap: 16px;
    width: 450px;
    height: 66px;
    margin: 0 30px 0 24px;
    padding: 0 24px;
    border: 2px solid #7c7a38;
    border-radius: 33px;
    background-color: #2e7f8b;
    color: #ff9f0a;
}

.nav-search input,
.side-search input {
    width: 100%;
    padding: 0;
    border: 0;
    outline: 0;
    background: none;
    font-size: 26px;
}

.nav-search input::placeholder {
    color: #a4c6cb;
    opacity: 1;
}

.systray {
    display: flex;
    gap: 48px;
}

.tray {
    position: relative;
}

.plane {
    color: #a86400;
}

.badge {
    position: absolute;
    top: -10px;
    left: 24px;
    min-width: 40px;
    height: 34px;
    padding: 0 7px;
    border-radius: 17px;
    font-size: 22px;
    line-height: 30px;
    text-shadow: 2px 2px 2px rgba(0, 0, 0, .3);
}

.badge.green { background-color: #28a745; color: #fff; }
.badge.amber { background-color: #ec9a11; color: #222; }
.badge.gold { background-color: #f5b82a; color: #7a2a0e; font-weight: 700; }

.mute {
    margin: 0 34px 0 66px;
    color: #ffc107;
}

.cowork {
    display: flex;
    align-items: center;
    gap: 12px;
    height: 60px;
    padding: 0 24px;
    border: 0;
    border-radius: 16px;
    background: linear-gradient(135deg, #0891b2, #0e7490);
    font-size: 24px;
    letter-spacing: 1px;
}

.company {
    margin: 0 26px 0 23px;
}

.avatar {
    position: relative;
    width: 52px;
    height: 52px;
    padding: 0;
    border: 0;
    border-radius: 8px;
    background-color: #28a758;
}

.status {
    position: absolute;
    right: -4px;
    bottom: -2px;
    width: 20px;
    height: 20px;
    border: 3px solid #666;
    border-radius: 50%;
    background-color: #fff;
    box-shadow: 0 0 0 2px #fff;
}

/* App rail */
.workspace {
    display: flex;
    flex: 1;
    min-height: 0;
}

.rail {
    width: 128px;
    flex-shrink: 0;
    overflow: hidden;
    background-color: #fff;
    border-right: 2px solid #dfe3e8;
}

.rail-toggle {
    display: flex;
    align-items: center;
    width: 100%;
    height: 78px;
    padding: 0 14px;
    border: 0;
    border-bottom: 2px solid #dcdee0;
    background: none;
    color: #6c757d;
}

.rail-apps {
    display: flex;
    flex-direction: column;
    align-items: center;
    gap: 32px;
    padding-top: 32px;
}

.rail-apps a {
    display: flex;
}

.rail-apps svg {
    width: 70px;
    height: 70px;
}

.calendar-icon {
    font-size: 52px;
    font-weight: 700;
}

/* Dashboard list */
.sidebar {
    width: 528px;
    flex-shrink: 0;
    overflow: hidden;
    padding: 6px 16px 0;
    background-color: #fff;
    border-right: 2px solid #e7eaee;
    box-shadow: inset 16px 0 16px -16px rgba(0, 0, 0, .12);
}

.sidebar-head {
    display: flex;
    align-items: center;
    gap: 38px;
    height: 98px;
    padding: 0 20px 0 16px;
    color: #11756e;
}

.sidebar-head h2 {
    margin-right: auto;
    font-size: 33px;
    color: #0b1630;
}

.side-search {
    display: flex;
    align-items: center;
    gap: 12px;
    height: 54px;
    margin: 0 8px;
    padding: 0 18px;
    border: 2px solid #dee2e6;
    border-radius: 16px;
    color: #64748b;
}

.side-search input::placeholder {
    color: #adb5bd;
    opacity: 1;
}

.side-nav {
    padding-top: 15px;
}

.side-nav h3 {
    height: 66px;
    padding: 22px 16px 12px;
    font-size: 22px;
    line-height: 32px;
    letter-spacing: 1px;
    color: #64748b;
}

.side-nav a {
    display: flex;
    align-items: center;
    gap: 16px;
    height: 76px;
    padding: 0 20px;
    border-radius: 16px;
}

.side-nav svg {
    width: 48px;
    height: 48px;
}

.side-nav .active {
    background-color: #e2eeee;
    color: #0f766e;
    font-weight: 700;
}

/* Main area */
.main {
    flex: 1;
    min-width: 0;
    overflow: hidden;
    padding: 36px 44px 0;
}

.hero {
    display: flex;
    justify-content: space-between;
    min-height: 228px;
    padding: 32px 36px;
    border: 2px solid #b9d7d5;
    border-radius: 32px;
    background: linear-gradient(135deg, #dbe9e8 0%, #eef3f4 35%, #fafcfb 70%);
}

.hero-title {
    display: flex;
    gap: 20px;
    height: 76px;
}

.hero-title svg {
    width: 68px;
    height: 68px;
}

.hero-title h1 {
    font-family: "Noto Sans", sans-serif;
    font-size: 46px;
    line-height: 76px;
    color: #0b1225;
}

.hero-text p {
    max-width: 1020px;
    color: #64748b;
}

.hero-actions {
    display: flex;
    align-items: flex-start;
    gap: 13px;
    font-size: 26px;
}

.hero-actions button,
.clock {
    display: flex;
    align-items: center;
    gap: 8px;
    height: 56px;
}

.hero-actions button {
    padding: 0 15px;
    border: 2px solid #e7eaee;
    border-radius: 8px;
    background-color: #fff;
}

.clock {
    gap: 6px;
    margin-right: 6px;
    color: #64748b;
}

.filters {
    display: flex;
    align-items: center;
    gap: 18px;
    height: 58px;
    margin: 44px 0 36px;
    font-size: 26px;
}

.pill {
    display: flex;
    align-items: center;
    gap: 6px;
    height: 58px;
    padding: 0 22px;
    border: 2px solid #e7eaee;
    border-radius: 29px;
    background-color: #fff;
}

select.pill {
    appearance: none;
    padding: 0 58px 0 24px;
    background: #fff url("data:image/svg+xml,%3Csvg xmlns='http://www.w3.org/2000/svg' viewBox='0 0 24 24'%3E%3Cpath d='M2 6l10 11L22 6' fill='none' stroke='%23343a40' stroke-width='2.800'/%3E%3C/svg%3E") right 24px center / 22px no-repeat;
}

.btn-group {
    display: flex;
}

.btn-group button {
    height: 54px;
    padding: 0 17px;
    border: 2px solid #dee2e6;
    background-color: #fff;
}

.btn-group button:first-child { border-radius: 8px 0 0 8px; }
.btn-group button:last-child { border-radius: 0 8px 8px 0; }

.btn-group .on {
    border-color: #b9bec4;
    background-color: #d3d6da;
}

.card {
    border: 2px solid #eceef1;
    border-radius: 28px;
    background-color: #fff;
    box-shadow: 0 6px 24px rgba(15, 23, 42, .06);
}

.summary {
    display: flex;
    align-items: center;
    justify-content: flex-end;
    height: 156px;
    margin-bottom: 30px;
    padding: 0 88px;
    color: #94a3b8;
}

.board {
    display: grid;
    grid-template-columns: repeat(12, 1fr);
    gap: 30px;
}

.indigo { --tone: #4f46e5; }
.violet { --tone: #7c3aed; }

.kpi {
    grid-column: span 3;
    min-height: 346px;
    padding: 18px 28px;
    border-top: 6px solid var(--tone);
    background: linear-gradient(color-mix(in srgb, var(--tone) 7%, #fff), #fff 50%);
}

.second {
    grid-column: 4 / span 3;
}

.kpi header,
.chart header {
    display: flex;
    align-items: center;
    gap: 12px;
}

.chip {
    display: flex;
    align-items: center;
    justify-content: center;
    width: 52px;
    height: 52px;
    border-radius: 16px;
    background-color: color-mix(in srgb, var(--tone) 14%, #fff);
    color: var(--tone);
}

.chip svg {
    width: 34px;
    height: 28px;
}

.card h4 {
    font-family: "Noto Sans", sans-serif;
    font-size: 27px;
    font-weight: 600;
    line-height: 40px;
    color: #475569;
}

.info {
    color: #94a3b8;
}

.kpi strong {
    display: block;
    margin: 10px 0 12px;
    font-size: 66px;
    line-height: 76px;
    color: #0b1225;
}

.kpi small {
    display: block;
    font-size: 24px;
    line-height: 36px;
    color: #64748b;
}

.bullet {
    position: relative;
    display: flex;
    align-items: center;
    height: 24px;
    margin: 8px 0 10px;
    border-radius: 6px;
    background: linear-gradient(90deg, #e6c4cf 72%, #ecd5bb 72% 80%, #bfe0d6 80%);
}

.bullet-fill {
    height: 12px;
    border-radius: 4px;
    background-color: #40404d;
}

.bullet-mark {
    position: absolute;
    top: 0;
    width: 6px;
    height: 24px;
    background-color: #0f172a;
}

.target {
    display: flex;
    align-items: center;
    gap: 12px;
    font-size: 24px;
    line-height: 32px;
    color: #64748b;
}

.tag {
    padding: 0 15px;
    border-radius: 16px;
    background-color: #fde3c4;
    color: #b45309;
    font-size: 22px;
    font-weight: 700;
}

.chart {
    padding: 18px 28px;
}

.chart h4 {
    color: #334155;
}

.wide { grid-column: span 8; }
.narrow { grid-column: span 4; }

.metric {
    padding: 0 12px;
    border: 2px solid #dee2e6;
    border-radius: 18px;
    font-size: 20px;
    font-weight: 700;
    line-height: 30px;
    letter-spacing: 1px;
    color: #64748b;
}

.wide .metric {
    margin-left: 4px;
}

.line-chart {
    display: block;
    width: 100%;
    margin-top: 16px;
}

.axis {
    font-size: 24px;
    fill: #64748b;
}

.narrow .info {
    margin-left: 22px;
}

.bars {
    display: grid;
    grid-template-columns: 230px 1fr;
    column-gap: 22px;
    margin: 34px 0 0 22px;
    font-size: 24px;
    color: #64748b;
}

.bar-label,
.bar-track {
    display: flex;
    align-items: center;
    height: 107px;
}

.bar-track {
    gap: 12px;
    background: repeating-linear-gradient(90deg, #e9ecef 0 2px, transparent 2px 135px);
}

.bar-track b {
    font-size: 22px;
    white-space: nowrap;
}

.bar {
    height: 76px;
    flex-shrink: 0;
    border-radius: 10px;
}

.blue { background-color: #0891b2; }
.teal { background-color: #0f766e; }

/* Open tabs */
.tabs {
    display: flex;
    align-items: flex-start;
    gap: 4px;
    height: 68px;
    flex-shrink: 0;
    padding: 8px 18px 0;
    border-top: 2px solid #dcdfe2;
    background-color: #ebedf0;
    font-size: 26px;
}

.tab {
    display: flex;
    align-items: center;
    gap: 14px;
    height: 52px;
    padding: 4px 60px 0 18px;
    border-radius: 16px 16px 0 0;
    background-color: #dfe1e4;
    color: #495057;
}

.tab > svg {
    width: 32px;
    height: 32px;
}

.tab.active {
    height: 54px;
    padding: 0 20px 0 14px;
    border: 2px solid #dee2e6;
    border-top: 6px solid #838f56;
    border-bottom: 0;
    background-color: #fff;
    font-weight: 700;
    color: #212529;
}

.tab .icon-btn {
    margin-left: 6px;
    color: #777;
}

.add-tab {
    margin: 14px 22px;
    color: #6c757d;
}

/* Dialog */
.backdrop {
    position: fixed;
    inset: 0;
    display: flex;
    align-items: center;
    justify-content: center;
    background-color: rgba(0, 0, 0, .5);
}

.modal {
    width: 1960px;
    max-width: 100%;
    border: 2px solid rgba(0, 0, 0, .2);
    border-radius: 10px;
    background-color: #fff;
    background-clip: padding-box;
}

.modal-head {
    display: flex;
    align-items: center;
    justify-content: space-between;
    height: 118px;
    padding: 0 32px;
    border-bottom: 2px solid #dee2e6;
    color: #808080;
}

.modal-head h4 {
    font-family: "Noto Sans", sans-serif;
    font-size: 34px;
    font-weight: 500;
    color: #000;
}

.modal-body {
    padding: 48px 32px 84px;
}

.modal-body p {
    margin-bottom: 32px;
    color: #7a8087;
}

.field {
    display: grid;
    grid-template-columns: 302px 1fr;
    align-items: start;
}

.field-file {
    min-height: 92px;
}

.field-text {
    margin-bottom: 28px;
}

.field-name {
    margin-bottom: 36px;
}

.field sup {
    color: #0891b2;
    font-size: 21px;
    line-height: 0;
    vertical-align: 12px;
}

.field textarea {
    height: 100px;
    padding: 4px 8px;
    border: 0;
    border-bottom: 2px solid #136f78;
    outline: 0;
    resize: none;
}

.field textarea::placeholder {
    color: #c0c6cc;
    opacity: 1;
}

.field input[type="text"] {
    height: 42px;
    border: 0;
    outline: 0;
}

.radios {
    display: grid;
    gap: 10px;
}

.radios label {
    display: flex;
    align-items: center;
    gap: 15px;
}

.radios input {
    appearance: none;
    width: 28px;
    height: 28px;
    border: 2px solid #dee2e6;
    border-radius: 50%;
}

.radios input:checked {
    border: 8px solid #146e79;
}

.btn {
    height: 66px;
    padding: 0 22px;
    border: 0;
    border-radius: 8px;
}

.primary {
    background-color: #146e79;
    color: #fff;
}

.secondary {
    background-color: #dee1e6;
}

.modal-foot {
    display: flex;
    gap: 8px;
    padding: 30px 32px 32px;
    border-top: 2px solid #dee2e6;
}
```
